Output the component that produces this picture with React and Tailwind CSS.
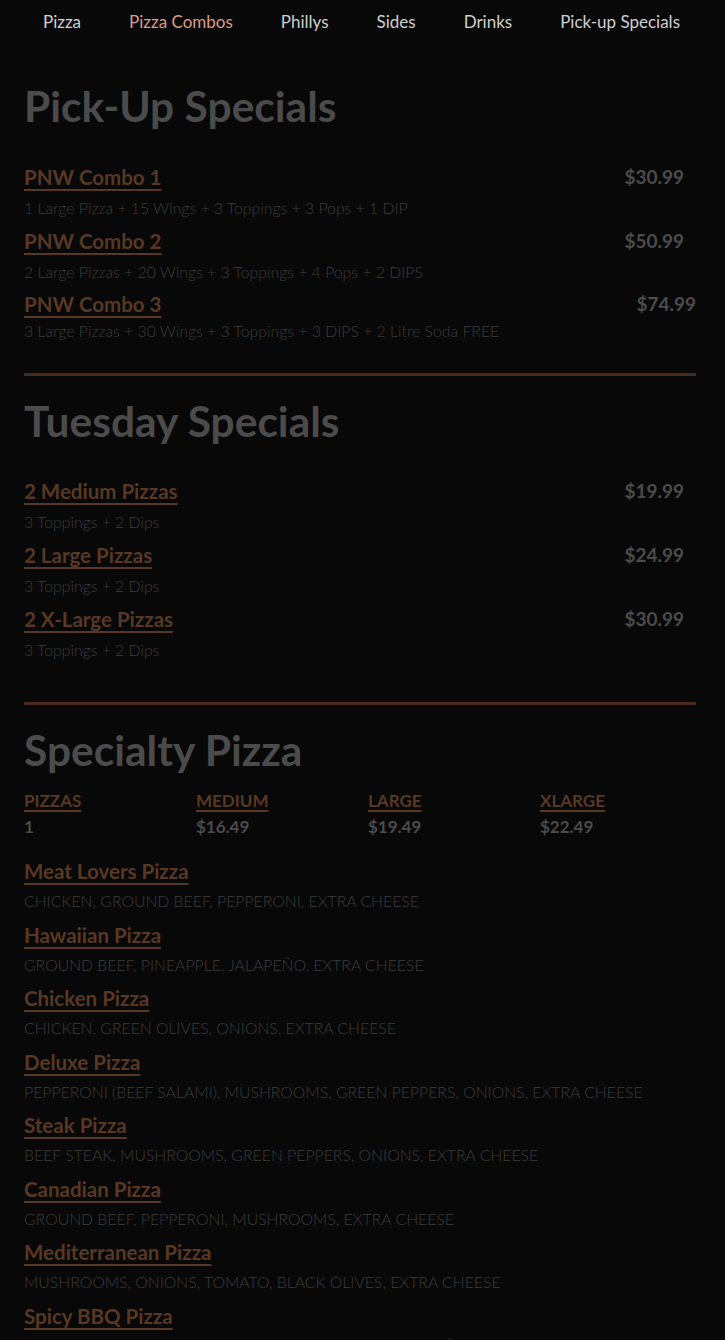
import React from "react";

const nav = ["Pizza", "Pizza Combos", "Phillys", "Sides", "Drinks", "Pick-up Specials"];

const pickup = [
  { t: "PNW Combo 1", d: "1 Large Pizza + 15 Wings + 3 Toppings + 3 Pops + 1 DIP", p: "$30.99", inset: true },
  { t: "PNW Combo 2", d: "2 Large Pizzas + 20 Wings + 3 Toppings + 4 Pops + 2 DIPS", p: "$50.99", inset: true },
  { t: "PNW Combo 3", d: "3 Large Pizzas + 30 Wings + 3 Toppings + 3 DIPS + 2 Litre Soda FREE", p: "$74.99", inset: false },
];

const tuesday = [
  { t: "2 Medium Pizzas", d: "3 Toppings + 2 Dips", p: "$19.99" },
  { t: "2 Large Pizzas", d: "3 Toppings + 2 Dips", p: "$24.99" },
  { t: "2 X-Large Pizzas", d: "3 Toppings + 2 Dips", p: "$30.99" },
];

const specialty = [
  { t: "Meat Lovers Pizza", d: "CHICKEN, GROUND BEEF, PEPPERONI, EXTRA CHEESE" },
  { t: "Hawaiian Pizza", d: "GROUND BEEF, PINEAPPLE, JALAPEÑO, EXTRA CHEESE" },
  { t: "Chicken Pizza", d: "CHICKEN, GREEN OLIVES, ONIONS, EXTRA CHEESE" },
  { t: "Deluxe Pizza", d: "PEPPERONI (BEEF SALAMI), MUSHROOMS, GREEN PEPPERS, ONIONS, EXTRA CHEESE" },
  { t: "Steak Pizza", d: "BEEF STEAK, MUSHROOMS, GREEN PEPPERS, ONIONS, EXTRA CHEESE" },
  { t: "Canadian Pizza", d: "GROUND BEEF, PEPPERONI, MUSHROOMS, EXTRA CHEESE" },
  { t: "Mediterranean Pizza", d: "MUSHROOMS, ONIONS, TOMATO, BLACK OLIVES, EXTRA CHEESE" },
  { t: "Spicy BBQ Pizza", d: "CHICKEN, BBQ SAUCE, ONIONS, GREEN PEPPERS, JALAPEÑO, EXTRA CHEESE" },
];

function Heading({ children }) {
  return (
    <h2 className="text-[42.5px] font-bold leading-[48px] text-[#4b4b4b]">{children}</h2>
  );
}

function Link({ children }) {
  return (
    <span className="block w-fit text-[20.5px] font-bold leading-[26px] text-[#593823] underline decoration-[2px] underline-offset-[4px]">
      {children}
    </span>
  );
}

function Price({ children }) {
  return <span className="block text-[19px] font-bold leading-[26px] text-[#4b4b4b]">{children}</span>;
}

function Desc({ children, className = "" }) {
  return <p className={`text-[15.8px] font-light leading-[20px] text-[#3d3d3d] ${className}`}>{children}</p>;
}

export default function App() {
  return (
    <div className="min-h-screen bg-[#080808]" style={{ fontFamily: "Lato, 'Open Sans', sans-serif" }}>
      <nav className="flex h-[44px] items-center justify-center gap-12 pr-[2px]">
        {nav.map((n, i) => (
          <span key={n} className={`text-[17px] leading-[24px] ${i === 1 ? "text-[#dc9d86]" : "text-[#cfcfcf]"}`}>
            {n}
          </span>
        ))}
      </nav>

      <main className="pl-[24px] pr-[29px]">
        <section className="pt-[38px]">
          <Heading>Pick-Up Specials</Heading>
          <div className="mt-[34px] flex flex-col">
            {pickup.map((it, i) => (
              <div key={it.t} className={i === 2 ? "mt-[9px]" : i === 1 ? "mt-[10px]" : ""}>
                <div className={`flex items-center justify-between ${it.inset ? "pr-[12px]" : ""}`}>
                  <Link>{it.t}</Link>
                  <Price>{it.p}</Price>
                </div>
                <Desc className={i === 2 ? "mt-[4px]" : "mt-[8px]"}>{it.d}</Desc>
              </div>
            ))}
          </div>
          <div className="mt-[32px] h-[3px] bg-[#4a2c1a]" />
        </section>

        <section className="pt-[21px]">
          <Heading>Tuesday Specials</Heading>
          <div className="mt-[33px] flex flex-col gap-[10px]">
            {tuesday.map((it) => (
              <div key={it.t}>
                <div className="flex items-center justify-between pr-[12px]">
                  <Link>{it.t}</Link>
                  <Price>{it.p}</Price>
                </div>
                <Desc className="mt-[8px]">{it.d}</Desc>
              </div>
            ))}
          </div>
          <div className="mt-[42px] h-[3px] bg-[#4a2c1a]" />
        </section>

        <section className="pt-[21px]">
          <Heading>Specialty Pizza</Heading>
          <div className="mt-[17px] grid grid-cols-[172px_172px_172px_1fr] gap-y-[6px]">
            {["PIZZAS", "MEDIUM", "LARGE", "XLARGE"].map((h) => (
              <span key={h} className="block text-[17px] font-bold leading-[20px] text-[#593823] underline decoration-[2px] underline-offset-[3px]">
                {h}
              </span>
            ))}
            {["1", "$16.49", "$19.49", "$22.49"].map((v) => (
              <span key={v} className="block text-[17px] font-bold leading-[20px] text-[#4b4b4b]">{v}</span>
            ))}
          </div>
          <div className="mt-[21px] flex flex-col gap-[10.5px]">
            {specialty.map((it) => (
              <div key={it.t}>
                <Link>{it.t}</Link>
                <Desc className="mt-[7px]">{it.d}</Desc>
              </div>
            ))}
          </div>
        </section>
      </main>
    </div>
  );
}
